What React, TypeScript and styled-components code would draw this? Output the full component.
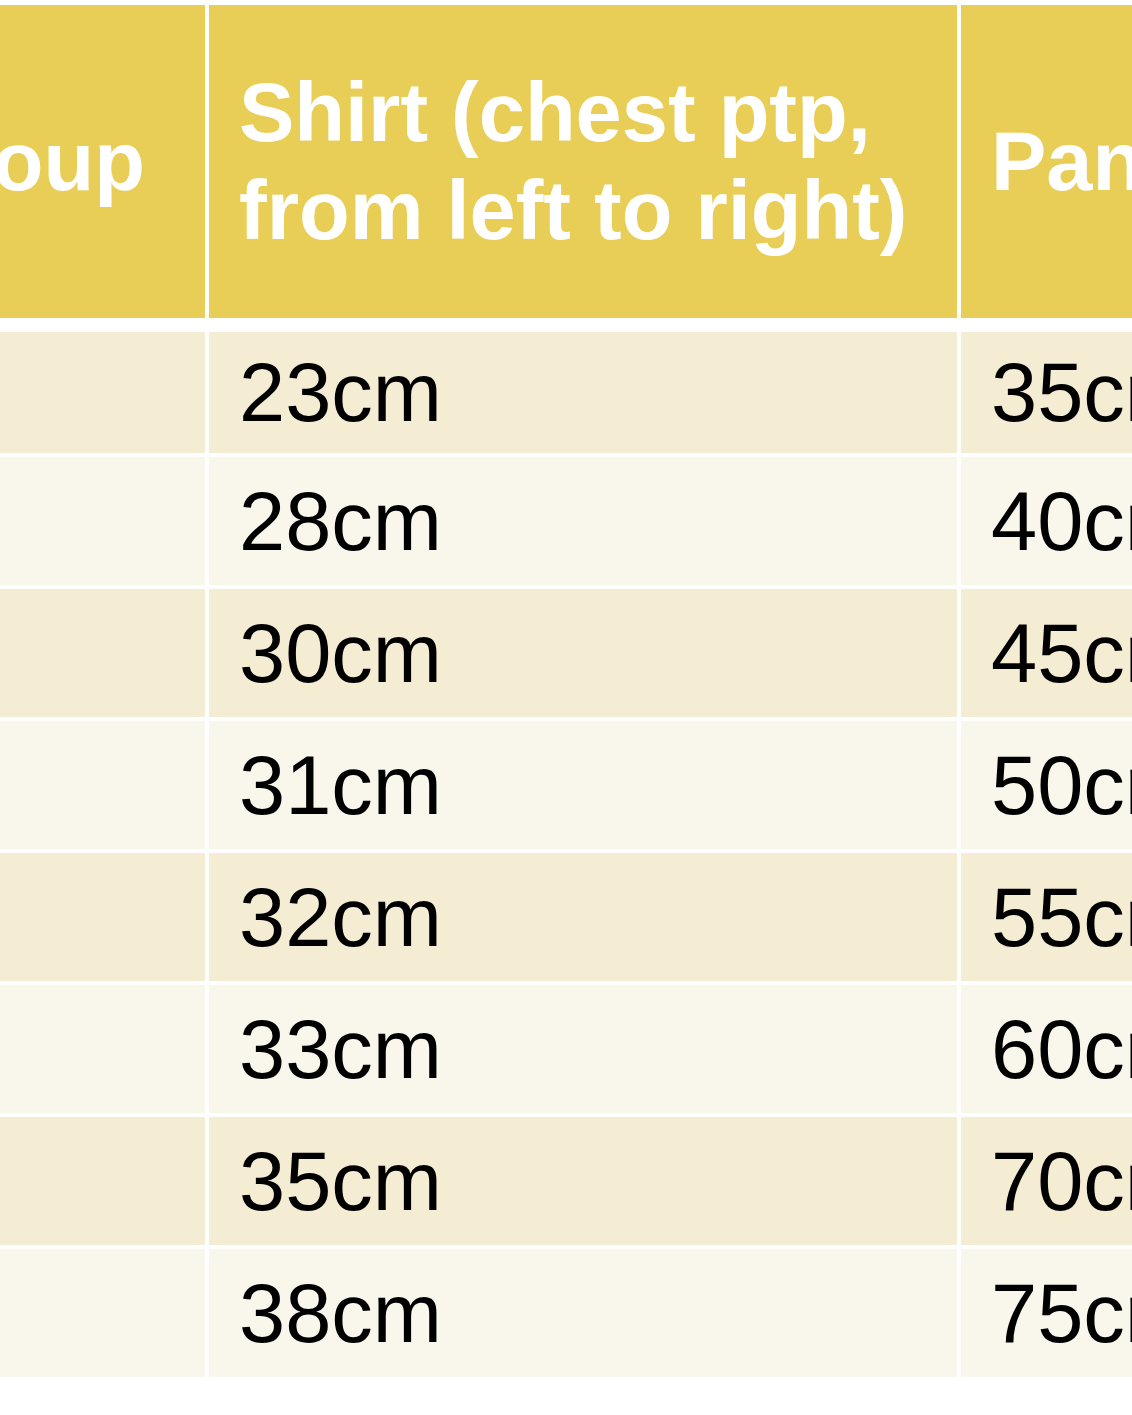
import React from "react";
import styled, { createGlobalStyle } from "styled-components";

const rows = [
  { shirt: "23cm", pants: "35cm" },
  { shirt: "28cm", pants: "40cm" },
  { shirt: "30cm", pants: "45cm" },
  { shirt: "31cm", pants: "50cm" },
  { shirt: "32cm", pants: "55cm" },
  { shirt: "33cm", pants: "60cm" },
  { shirt: "35cm", pants: "70cm" },
  { shirt: "38cm", pants: "75cm" },
];

const App: React.FC = () => {
  return (
    <>
      <GlobalStyle />
      <Viewport>
        <Table>
          <HeaderRow>
            <HeaderCell $col="group">Age group</HeaderCell>
            <HeaderCell $col="shirt">
              Shirt (chest ptp,
              <br />
              from left to right)
            </HeaderCell>
            <HeaderCell $col="pants">Pants (waist)</HeaderCell>
          </HeaderRow>
          {rows.map((row, i) => (
            <BodyRow key={row.shirt} $odd={i % 2 === 0} $first={i === 0}>
              <Cell $col="group" />
              <Cell $col="shirt">{row.shirt}</Cell>
              <Cell $col="pants">{row.pants}</Cell>
            </BodyRow>
          ))}
        </Table>
      </Viewport>
    </>
  );
};

export default App;

const GlobalStyle = createGlobalStyle`
  html, body {
    margin: 0;
    padding: 0;
    background: #ffffff;
    overflow: hidden;
  }
  body {
    font-family: "Liberation Sans", Arial, sans-serif;
  }
`;

type Col = "group" | "shirt" | "pants";

const widths: Record<Col, string> = {
  group: "505px",
  shirt: "748px",
  pants: "600px",
};

const Viewport = styled.div`
  width: 100vw;
  height: 100vh;
  overflow: hidden;
  padding-top: 5px;
  box-sizing: border-box;
`;

const Table = styled.div`
  display: flex;
  flex-direction: column;
  gap: 4px;
  margin-left: -300px;
  width: max-content;
`;

const Row = styled.div`
  display: flex;
  gap: 4px;
`;

const HeaderRow = styled(Row)`
  height: 313px;
  margin-bottom: 10px;
`;

const BodyRow = styled(Row)<{ $odd: boolean; $first: boolean }>`
  height: ${({ $first }) => ($first ? "121px" : "128px")};
  margin-top: ${({ $first }) => ($first ? "0" : "1px")};
  margin-bottom: -1px;
  background: transparent;

  & > div {
    background: ${({ $odd }) => ($odd ? "#f5edd3" : "#f9f6eb")};
  }
`;

const BaseCell = styled.div<{ $col: Col }>`
  flex: 0 0 ${({ $col }) => widths[$col]};
  box-sizing: border-box;
  padding-left: 30px;
  display: flex;
  align-items: center;
  font-size: 83px;
  white-space: nowrap;
`;

const HeaderCell = styled(BaseCell)`
  background: #e8ce56;
  color: #ffffff;
  font-weight: 700;
  line-height: 98px;
`;

const Cell = styled(BaseCell)`
  color: #000000;
  font-weight: 400;
  line-height: 1;
`;
